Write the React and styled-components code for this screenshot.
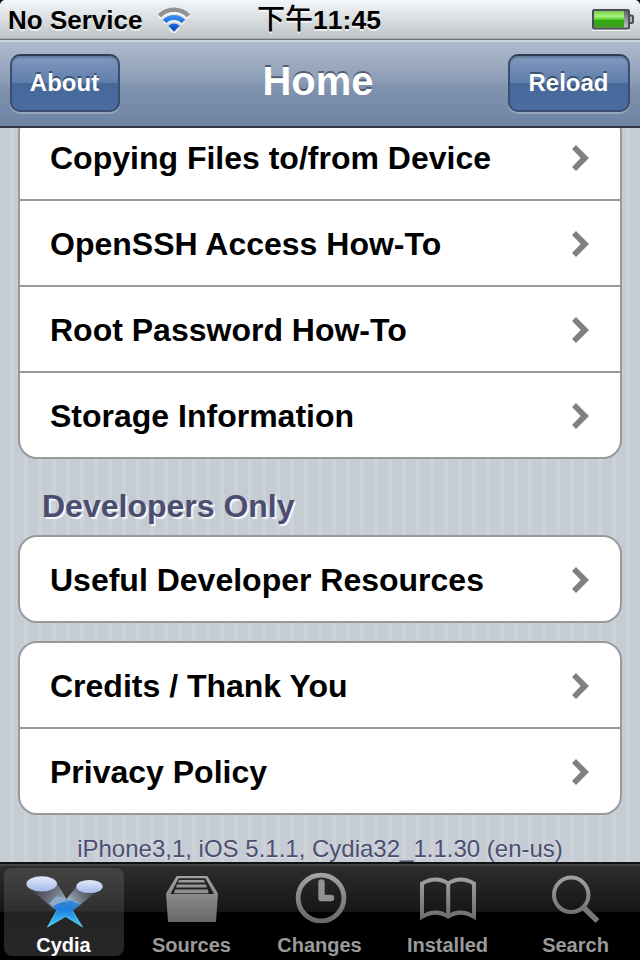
import React from "react";
import styled, { createGlobalStyle } from "styled-components";

const GlobalStyle = createGlobalStyle`
  *, *::before, *::after { box-sizing: border-box; }
  body { margin: 0; background: #000; }
`;

const Screen = styled.div`
  width: 640px;
  height: 960px;
  display: flex;
  flex-direction: column;
  overflow: hidden;
  background: #000;
  font-family: "Liberation Sans", "Noto Sans CJK TC", sans-serif;
  font-kerning: none;
`;

const StatusBar = styled.header`
  flex: none;
  height: 40px;
  display: grid;
  grid-template-columns: 1fr auto 1fr;
  align-items: center;
  padding: 0 6px 0 8px;
  border-bottom: 1px solid #6d7275;
  border-radius: 5px 5px 0 0;
  background: linear-gradient(#f2f7fa 0, #e6eaec 25%, #bfc5c8 96%, #a0a6a9 100%);
  color: #000;
  font-size: 26px;
  font-weight: bold;
  line-height: 40px;
  text-shadow: 0 2px 0 rgba(255, 255, 255, 0.65);
`;

const Carrier = styled.div`
  display: flex;
  align-items: center;
  gap: 15px;
  height: 38px;
`;

const Clock = styled.div`
  display: flex;
  align-items: center;
  height: 36px;
  padding-right: 4px;
  font-size: 26.5px;
`;

const Meridiem = styled.span`
  font-family: "Liberation Sans", "Noto Sans CJK TC", sans-serif;
  font-size: 28px;
  font-weight: 500;
  line-height: 36px;
`;

const BatterySlot = styled.div`
  display: flex;
  justify-content: flex-end;
`;

const NavBar = styled.nav`
  flex: none;
  height: 88px;
  display: grid;
  grid-template-columns: 110px auto 122px;
  justify-content: space-between;
  align-items: center;
  padding: 0 10px 2px;
  border-top: 2px solid #cdd5df;
  border-bottom: 2px solid #2d3642;
  background: linear-gradient(#b0bccd 0, #8a9bb5 49%, #8194b0 51%, #6d84a3 100%);
`;

const Title = styled.h1`
  margin: 0;
  padding: 0 0 4px 8px;
  color: #fff;
  font-size: 40px;
  line-height: 44px;
  text-shadow: 0 -2px 0 rgba(45, 55, 70, 0.65);
`;

const NavButton = styled.button`
  height: 58px;
  padding: 0 1px 0 0;
  border: 2px solid #3a4f70;
  border-top-color: #2f3c51;
  border-radius: 10px;
  background: linear-gradient(#8199bd 0, #5f7eac 49%, #466899 51%, #4a6c9f 100%);
  box-shadow: 0 2px 0 rgba(255, 255, 255, 0.25), inset 0 2px 1px rgba(40, 55, 80, 0.28);
  color: #fff;
  font: bold 24px/52px "Liberation Sans", sans-serif;
  font-kerning: none;
  text-shadow: 0 -2px 0 rgba(35, 50, 75, 0.65);
`;

const Content = styled.main`
  flex: none;
  height: 734px;
  overflow: hidden;
  display: flex;
  flex-direction: column;
  padding: 0 18px;
  background: linear-gradient(90deg, #c5ccd4 0 10px, #cbd2d8 10px 14px) 0 0 / 14px 100%;
`;

const Card = styled.section`
  flex: none;
  margin-top: ${(p) => p.$gap}px;
  border: 2px solid #979a9d;
  border-radius: 19px;
  background: #fff;
`;

const Row = styled.a`
  display: flex;
  align-items: center;
  justify-content: space-between;
  height: 84px;
  padding: 2px 30px 0;
  color: #000;
  font-size: 32px;
  font-weight: bold;
  font-kerning: normal;

  & + & {
    height: 86px;
    border-top: 2px solid #999;
  }
`;

const SectionTitle = styled.h2`
  flex: none;
  height: 76px;
  margin: 0;
  padding: 18px 24px 0;
  color: #4d4d70;
  font-size: 32px;
  line-height: 58px;
  text-shadow: 2px 2px 1px rgba(255, 255, 255, 0.85);
`;

const Footnote = styled.p`
  margin: 20px 0 0;
  color: #4d4d70;
  font-size: 24px;
  line-height: 28px;
  text-align: center;
  text-shadow: 0 1px 1px rgba(255, 255, 255, 0.5);
`;

const TabBar = styled.footer`
  flex: none;
  height: 98px;
  display: grid;
  grid-template-columns: repeat(5, 120px);
  justify-content: space-between;
  padding: 4px 4px 4px;
  border-top: 2px solid #101112;
  background: linear-gradient(#434343 0 2px, #2d2d2d 2px, #161616 48px, #000 48px);
`;

const Tab = styled.div`
  display: flex;
  flex-direction: column;
  align-items: center;
  height: 88px;
  border-radius: 8px;
  background: ${(p) =>
    p.$active ? "linear-gradient(#434343 0, #303030 43px, #232323 44px, #272727 100%)" : "none"};
  color: ${(p) => (p.$active ? "#fff" : "#9a9a9a")};
  font-size: 20px;
  font-weight: bold;
  line-height: 22px;
`;

const TabLabel = styled.span`
  padding-right: 1px;
`;

const TabIcon = styled.svg`
  flex: none;
  width: 90px;
  height: 66px;
`;

const Wifi = () => (
  <svg width="34" height="26" viewBox="0 0 34 26">
    <defs>
      <linearGradient id="wifiBlue" x1="0" y1="8" x2="0" y2="24" gradientUnits="userSpaceOnUse">
        <stop offset="0" stopColor="#3c95f2" />
        <stop offset="1" stopColor="#0645c8" />
      </linearGradient>
    </defs>
    <g fill="none" stroke="#fff" strokeWidth="4.5" opacity=".8" transform="translate(0 2)">
      <path d="M2.5 8.8A20.5 20.5 0 0 1 31.5 8.8" />
      <path d="M7.6 14.4A13 13 0 0 1 26.4 14.4" />
      <path d="M12 19.5L17 24.5L22 19.5" strokeWidth="1.5" />
    </g>
    <path d="M2.5 8.8A20.5 20.5 0 0 1 31.5 8.8" fill="none" stroke="#929292" strokeWidth="4.6" />
    <path d="M7.6 14.4A13 13 0 0 1 26.4 14.4" fill="none" stroke="url(#wifiBlue)" strokeWidth="5" />
    <path d="M11.4 18.8Q17 14 22.6 18.8L17 24.5Z" fill="url(#wifiBlue)" />
  </svg>
);

const Battery = () => (
  <svg width="42" height="22" viewBox="0 0 42 22">
    <defs>
      <linearGradient id="charge" x1="0" y1="0" x2="0" y2="1">
        <stop offset="0" stopColor="#78c94e" />
        <stop offset=".32" stopColor="#a7f47b" />
        <stop offset=".5" stopColor="#65d23b" />
        <stop offset=".56" stopColor="#33ad12" />
        <stop offset="1" stopColor="#3f9e1d" />
      </linearGradient>
      <linearGradient id="drained" x1="0" y1="0" x2="0" y2="1">
        <stop offset="0" stopColor="#5e5e65" />
        <stop offset="1" stopColor="#c8c8cc" />
      </linearGradient>
    </defs>
    <path d="M0 21.2H38" stroke="#fff" strokeOpacity=".7" strokeWidth="1.6" />
    <rect x="1" y="1" width="36" height="18.5" rx="1.5" fill="url(#drained)" stroke="#4a4c5a" strokeWidth="2" />
    <rect x="2" y="2" width="30" height="16.5" fill="url(#charge)" />
    <path d="M38 6.5H39.5Q41 6.5 41 8V12.5Q41 14 39.5 14H38" fill="#b5b5b8" stroke="#4a4c5a" strokeWidth="2" />
  </svg>
);

const Chevron = () => (
  <svg width="20" height="28" viewBox="0 0 20 28">
    <path d="M6 1L19 14L6 27L2 23L10.7 14L2 5Z" fill="#808080" />
  </svg>
);

const GreyFill = () => (
  <defs>
    <linearGradient id="grey" x1="0" y1="6" x2="0" y2="58" gradientUnits="userSpaceOnUse">
      <stop offset="0" stopColor="#a4a4a4" />
      <stop offset="1" stopColor="#636363" />
    </linearGradient>
  </defs>
);

const CydiaIcon = () => (
  <TabIcon viewBox="0 0 90 66">
    <GreyFill />
    <defs>
      <linearGradient id="disc" x1="0" y1="0" x2="0" y2="1">
        <stop offset="0" stopColor="#e4eafa" />
        <stop offset="1" stopColor="#a5b9ea" />
      </linearGradient>
      <linearGradient id="beamLeft" x1="20" y1="20" x2="46" y2="38" gradientUnits="userSpaceOnUse">
        <stop offset="0" stopColor="#5d6470" stopOpacity=".45" />
        <stop offset="1" stopColor="#a9b9cf" />
      </linearGradient>
      <linearGradient id="beamRight" x1="72" y1="20" x2="50" y2="36" gradientUnits="userSpaceOnUse">
        <stop offset="0" stopColor="#5d6470" stopOpacity=".45" />
        <stop offset="1" stopColor="#a9b9cf" />
      </linearGradient>
      <linearGradient id="star" x1="0" y1="32" x2="0" y2="59" gradientUnits="userSpaceOnUse">
        <stop offset="0" stopColor="#3f86cf" />
        <stop offset=".35" stopColor="#1d7fe0" />
        <stop offset="1" stopColor="#46d2fc" />
      </linearGradient>
    </defs>
    <path d="M10 20L35 41L50 35L37 14Z" fill="url(#beamLeft)" />
    <path d="M80 22L57 40L45 34L58 18Z" fill="url(#beamRight)" />
    <path
      d="M33 38L39 33.5L48 31.5L60 34.5L60 37L53.7 43L63.5 59L46.7 48.5L28.5 59L37.5 43Z"
      fill="url(#star)"
    />
    <path
      d="M37.5 43L28.5 59L46.7 48.5L63.5 59L53.7 43"
      fill="none"
      stroke="#62c9ee"
      strokeWidth="0.8"
    />
    <path d="M31 35.5L37 29L43 29.5L47 33L39 35.5L34 38.5Z" fill="#90a9c8" />
    <path d="M31 35.5L37 29L43 29.5L47 33.5L53 31.5L55 34L60 35" fill="none" stroke="#8fbbe0" strokeWidth="0.8" />
    <ellipse cx="22.7" cy="15.8" rx="15.3" ry="7.6" fill="url(#disc)" />
    <ellipse cx="70.5" cy="18.5" rx="13.2" ry="6.6" fill="url(#disc)" />
  </TabIcon>
);

const SourcesIcon = () => (
  <TabIcon viewBox="0 0 90 66">
    <g fill="url(#grey)">
      <path fillRule="evenodd" d="M29.7 8H60.3L71 25.5L69 54H21L19 25.5ZM31.5 10.3L23.5 26H67L58.5 10.3Z" />
      <path d="M32 12H57L58 14.5H31ZM30 16.5H59L60 19.5H29ZM28 21.5H61L61.5 25.2H27Z" />
    </g>
  </TabIcon>
);

const ChangesIcon = () => (
  <TabIcon viewBox="0 0 90 66">
    <circle cx="46" cy="30" r="22.9" fill="none" stroke="url(#grey)" strokeWidth="4.8" />
    <path d="M46.5 14.5V30H56" fill="none" stroke="#929292" strokeWidth="6.4" strokeLinecap="round" strokeLinejoin="round" />
  </TabIcon>
);

const InstalledIcon = () => (
  <TabIcon viewBox="0 0 90 66">
    <path
      d="M19 15.5Q33 7.5 45.2 15.5Q57.5 7.5 71 15.5V48.7Q57 40.5 45.2 48.7Q33 40.5 19 48.7Z M45.2 15V48.5"
      fill="none"
      stroke="url(#grey)"
      strokeWidth="4"
    />
  </TabIcon>
);

const SearchIcon = () => (
  <TabIcon viewBox="0 0 90 66">
    <circle cx="40.2" cy="26.8" r="17.2" fill="none" stroke="url(#grey)" strokeWidth="4" />
    <path d="M52 39L66.5 53" stroke="#787878" strokeWidth="5.5" />
  </TabIcon>
);

const guides = [
  "Copying Files to/from Device",
  "OpenSSH Access How-To",
  "Root Password How-To",
  "Storage Information",
];

const tabs = [
  ["Cydia", CydiaIcon],
  ["Sources", SourcesIcon],
  ["Changes", ChangesIcon],
  ["Installed", InstalledIcon],
  ["Search", SearchIcon],
];

const LinkCard = ({ items, gap }) => (
  <Card $gap={gap}>
    {items.map((label) => (
      <Row key={label}>
        {label}
        <Chevron />
      </Row>
    ))}
  </Card>
);

export default function App() {
  return (
    <>
      <GlobalStyle />
      <Screen>
        <StatusBar>
          <Carrier>
            No Service
            <Wifi />
          </Carrier>
          <Clock>
            <Meridiem>下午</Meridiem>11:45
          </Clock>
          <BatterySlot>
            <Battery />
          </BatterySlot>
        </StatusBar>
        <NavBar>
          <NavButton>About</NavButton>
          <Title>Home</Title>
          <NavButton>Reload</NavButton>
        </NavBar>
        <Content>
          <LinkCard items={guides} gap={-15} />
          <SectionTitle>Developers Only</SectionTitle>
          <LinkCard items={["Useful Developer Resources"]} gap={0} />
          <LinkCard items={["Credits / Thank You", "Privacy Policy"]} gap={18} />
          <Footnote>iPhone3,1, iOS 5.1.1, Cydia32_1.1.30 (en-us)</Footnote>
        </Content>
        <TabBar>
          {tabs.map(([label, Icon], i) => (
            <Tab key={label} $active={i === 0}>
              <Icon />
              <TabLabel>{label}</TabLabel>
            </Tab>
          ))}
        </TabBar>
      </Screen>
    </>
  );
}
